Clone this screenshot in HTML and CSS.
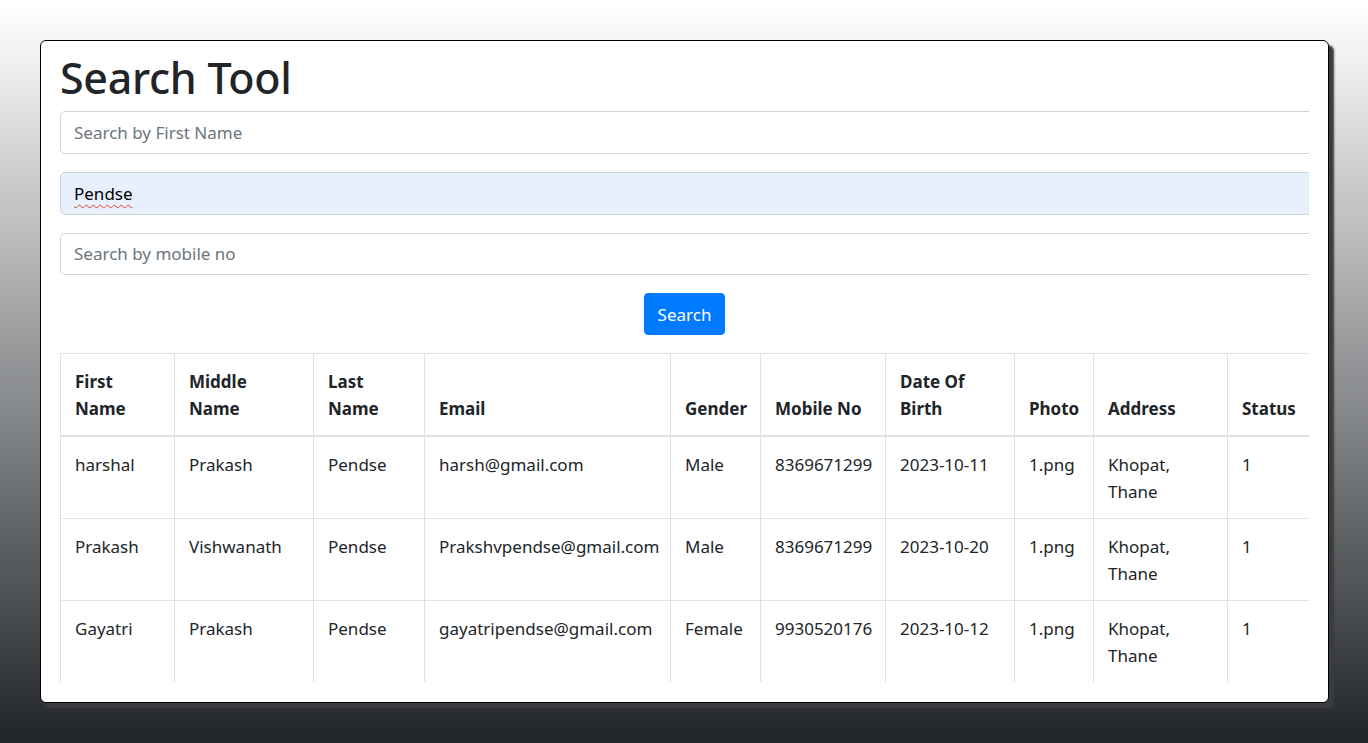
FILE: index.html
```html
<!DOCTYPE html>
<html>
<head>
<meta charset="utf-8">
<title>Search Tool</title>
<link rel="stylesheet" href="styles.css">
</head>
<body>
<div class="card">
  <div class="clip">
    <h1 class="title">Search Tool</h1>
    <input class="field" type="text" placeholder="Search by First Name">
    <div class="field filled"><span class="misspelled">Pendse</span></div>
    <input class="field" type="text" placeholder="Search by mobile no">
    <div class="actions"><button class="btn">Search</button></div>
    <table class="grid">
      <colgroup>
        <col style="width:114px"><col style="width:139px"><col style="width:111px"><col style="width:246px"><col style="width:90px"><col style="width:125px"><col style="width:129px"><col style="width:79px"><col style="width:134px"><col style="width:90px">
      </colgroup>
      <thead>
        <tr><th>First Name</th><th>Middle Name</th><th>Last Name</th><th>Email</th><th>Gender</th><th>Mobile No</th><th>Date Of Birth</th><th>Photo</th><th>Address</th><th>Status</th></tr>
      </thead>
      <tbody>
        <tr><td>harshal</td><td>Prakash</td><td>Pendse</td><td>harsh@gmail.com</td><td>Male</td><td>8369671299</td><td>2023-10-11</td><td>1.png</td><td>Khopat, Thane</td><td>1</td></tr>
        <tr><td>Prakash</td><td>Vishwanath</td><td>Pendse</td><td>Prakshvpendse@gmail.com</td><td>Male</td><td>8369671299</td><td>2023-10-20</td><td>1.png</td><td>Khopat, Thane</td><td>1</td></tr>
        <tr><td>Gayatri</td><td>Prakash</td><td>Pendse</td><td>gayatripendse@gmail.com</td><td>Female</td><td>9930520176</td><td>2023-10-12</td><td>1.png</td><td>Khopat, Thane</td><td>1</td></tr>
      </tbody>
    </table>
  </div>
</div>
</body>
</html>
```

FILE: styles.css
```css
html, body {
  margin: 0;
  padding: 0;
  height: 743px;
  overflow: hidden;
}
body {
  background: linear-gradient(to bottom, #ffffff 1%, #dfe0e1 15%, #212529 100%);
  font-family: "Noto Sans", "Open Sans", sans-serif;
  color: #212529;
  font-size: 17px;
  padding: 40px 39px 0 40px;
  box-sizing: border-box;
}
.card {
  background: #fff;
  border: 1px solid #000;
  border-radius: 6px;
  box-shadow: 5px 5px 2px #3c3c3c;
  height: 663px;
  box-sizing: border-box;
  padding: 11px 19px 20px 19px;
}
.clip {
  overflow: hidden;
  height: 100%;
}
.title {
  margin: 0 0 7px 0;
  font-size: 43px;
  font-weight: 500;
  line-height: 52px;
  letter-spacing: -0.3px;
}
.field {
  display: flex;
  align-items: center;
  width: calc(100% + 10px);
  height: 42.75px;
  box-sizing: border-box;
  border: 1px solid #ced4da;
  border-radius: 5px;
  padding: 0 13px;
  font-family: inherit;
  font-size: 17px;
  color: #212529;
  background: #fff;
  margin: 0 0 18px 0;
  outline: none;
}
.field::placeholder {
  color: #6c757d;
}
.field.filled {
  background: #e8f0fe;
  color: #000;
}
.misspelled {
  text-decoration: underline wavy #e53935;
  text-decoration-thickness: 1px;
  text-underline-offset: 4px;
  text-decoration-skip-ink: none;
}
.actions {
  display: flex;
  justify-content: center;
  margin-bottom: 18px;
}
.btn {
  background: #007bff;
  color: #fff;
  border: 1px solid #007bff;
  border-radius: 4px;
  font-family: inherit;
  font-size: 17px;
  height: 42px;
  padding: 0 13px;
}
.grid {
  border-collapse: collapse;
  table-layout: fixed;
  width: 1257px;
  font-size: 17px;
  line-height: 27px;
}
.grid th, .grid td {
  border: 1px solid #dee2e6;
  padding: 13.5px 14px;
  text-align: left;
  vertical-align: top;
}
.grid th {
  vertical-align: bottom;
  font-weight: 700;
  border-bottom: 2px solid #dee2e6;
}
```
